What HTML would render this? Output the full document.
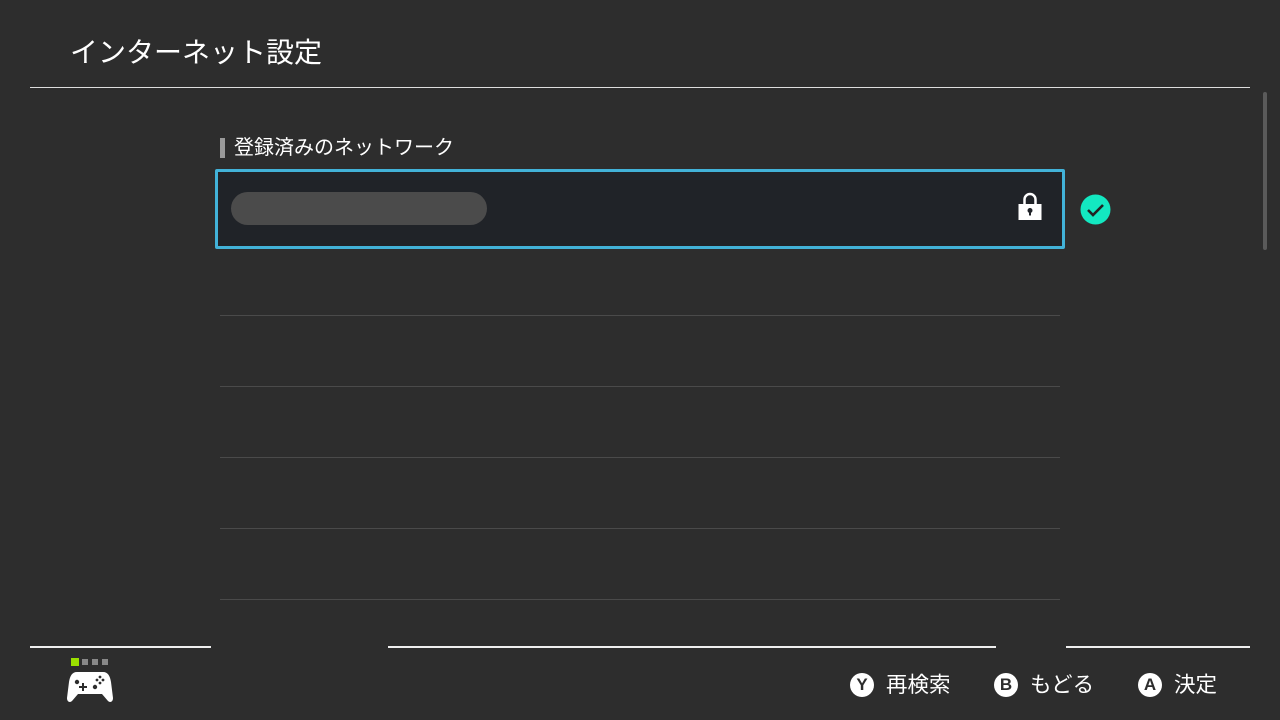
<!DOCTYPE html>
<html><head><meta charset="utf-8"><style>
body{margin:0;width:1280px;height:720px;background:#2d2d2d;position:relative;overflow:hidden;font-family:"Liberation Sans","Noto Sans CJK JP",sans-serif;color:#fff}
.a{position:absolute}
.hl{position:absolute;height:1px;background:#4a4a4a;left:220px;width:840px}
.fl{position:absolute;height:2px;background:#eee;top:646px}
.btn{position:absolute;top:670px;font-size:21.5px;line-height:30px;display:flex;align-items:center}
.c{width:24px;height:24px;border-radius:50%;background:#fff;color:#2d2d2d;font-weight:bold;font-size:17px;display:flex;align-items:center;justify-content:center;margin-right:12px;font-family:"Liberation Sans",sans-serif}
</style></head><body>
<div class="a" style="left:70px;top:34px;font-size:28px;line-height:38px">インターネット設定</div>
<div class="a" style="left:30px;top:87px;width:1220px;height:1px;background:#ddd"></div>
<div class="a" style="left:1263px;top:92px;width:4px;height:158px;background:#5a5a5a;border-radius:2px"></div>
<div class="a" style="left:220px;top:138px;width:5px;height:20px;background:#9a9a9a"></div>
<div class="a" style="left:234px;top:134px;font-size:20px;line-height:28px">登録済みのネットワーク</div>
<div class="a" style="left:215px;top:169px;width:844px;height:74px;border:3px solid #42b2d8;background:#202328;border-radius:2px"></div>
<div class="a" style="left:231px;top:192px;width:256px;height:33px;background:#4b4b4b;border-radius:17px"></div>
<svg class="a" style="left:1016px;top:191px" width="28" height="32" viewBox="0 0 28 32"><path d="M8.5 14V8.5a5.5 5.5 0 0 1 11 0V14" fill="none" stroke="#fff" stroke-width="2.5"/><rect x="2.5" y="13" width="23" height="16" fill="#fff"/><circle cx="14" cy="19.5" r="2.5" fill="#202328"/><rect x="13" y="19.5" width="2" height="5" fill="#202328"/></svg>
<svg class="a" style="left:1080px;top:194px" width="31" height="31" viewBox="0 0 31 31"><circle cx="15.5" cy="15.5" r="15" fill="#13e8c1"/><path d="M8 16l5 5 10-10" fill="none" stroke="#222" stroke-width="2.6"/></svg>
<div class="hl" style="top:315px"></div>
<div class="hl" style="top:386px"></div>
<div class="hl" style="top:457px"></div>
<div class="hl" style="top:528px"></div>
<div class="hl" style="top:599px"></div>
<div class="fl" style="left:30px;width:181px"></div>
<div class="fl" style="left:388px;width:608px"></div>
<div class="fl" style="left:1066px;width:184px"></div>
<div class="a" style="left:71px;top:658px;width:8px;height:8px;background:#9be000"></div>
<div class="a" style="left:82px;top:659px;width:6px;height:6px;background:#888"></div>
<div class="a" style="left:92px;top:659px;width:6px;height:6px;background:#888"></div>
<div class="a" style="left:102px;top:659px;width:6px;height:6px;background:#888"></div>
<svg class="a" style="left:67px;top:671px" width="46" height="33" viewBox="0 0 46 33"><path d="M10 1h26c5 0 7 4 8 10l2 16c0 4-3 5-5 3l-6-7H11l-6 7c-2 2-5 1-5-3l2-16C3 5 5 1 10 1z" fill="#fff"/><circle cx="10" cy="11" r="2.2" fill="#2d2d2d"/><circle cx="28" cy="16" r="2.2" fill="#2d2d2d"/><path d="M16 12v8M12 16h8" stroke="#2d2d2d" stroke-width="2"/><circle cx="33" cy="6" r="1.4" fill="#2d2d2d"/><circle cx="30" cy="9" r="1.4" fill="#2d2d2d"/><circle cx="36" cy="9" r="1.4" fill="#2d2d2d"/><circle cx="33" cy="12" r="1.4" fill="#2d2d2d"/></svg>
<div class="btn" style="left:850px"><span class="c">Y</span>再検索</div>
<div class="btn" style="left:994px"><span class="c">B</span>もどる</div>
<div class="btn" style="left:1138px"><span class="c">A</span>決定</div>
</body></html>
